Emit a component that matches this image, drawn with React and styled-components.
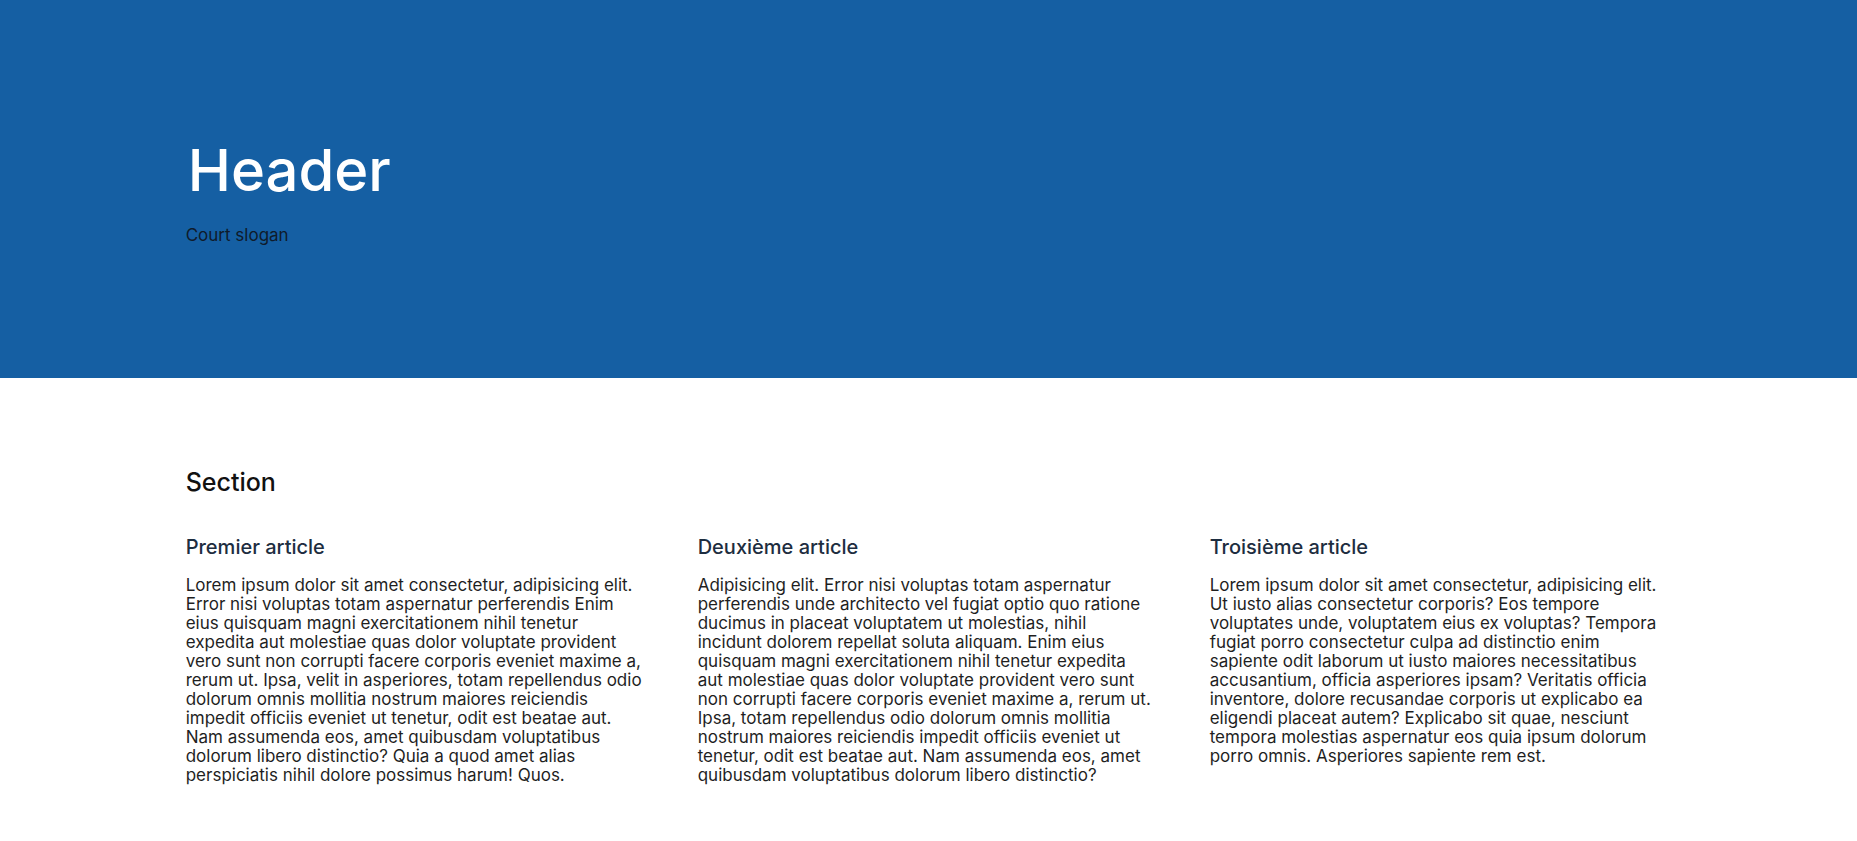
import React from 'react';
import styled, { createGlobalStyle } from 'styled-components';

const GlobalStyle = createGlobalStyle`
  html, body {
    margin: 0;
    padding: 0;
    background: #ffffff;
  }
  body {
    font-family: Inter, "DejaVu Sans", sans-serif;
    color: #1b1b1b;
  }
  h1, h2, h3, p {
    margin: 0;
  }
`;

const Page = styled.div`
  width: 100%;
`;

const Banner = styled.header`
  height: 378px;
  box-sizing: border-box;
  padding: 141px 10% 0;
  background-color: #155fa3;
`;

const BannerTitle = styled.h1`
  font-size: 58px;
  line-height: 58px;
  font-weight: 500;
  color: #ffffff;
  margin-left: 2px;
`;

const Slogan = styled.p`
  margin-top: 26px;
  font-size: 17px;
  line-height: 20px;
  font-weight: 400;
  color: #0f1b2b;
`;

const Main = styled.main`
  padding: 89px 10% 40px;
`;

const SectionTitle = styled.h2`
  font-size: 25px;
  line-height: 30px;
  font-weight: 500;
  color: #111111;
`;

const Articles = styled.div`
  display: grid;
  grid-template-columns: repeat(3, 457px);
  column-gap: 55px;
  margin-top: 38px;
`;

const Article = styled.article`
  min-width: 0;
`;

const ArticleTitle = styled.h3`
  font-size: 20px;
  line-height: 24px;
  font-weight: 500;
  color: #1d2d40;
`;

const ArticleText = styled.p`
  margin-top: 17px;
  font-size: 17px;
  line-height: 19px;
  font-weight: 400;
  color: #1f1f1f;
`;

const articles = [
  {
    title: 'Premier article',
    text: 'Lorem ipsum dolor sit amet consectetur, adipisicing elit. Error nisi voluptas totam aspernatur perferendis Enim eius quisquam magni exercitationem nihil tenetur expedita aut molestiae quas dolor voluptate provident vero sunt non corrupti facere corporis eveniet maxime a, rerum ut. Ipsa, velit in asperiores, totam repellendus odio dolorum omnis mollitia nostrum maiores reiciendis impedit officiis eveniet ut tenetur, odit est beatae aut. Nam assumenda eos, amet quibusdam voluptatibus dolorum libero distinctio? Quia a quod amet alias perspiciatis nihil dolore possimus harum! Quos.',
  },
  {
    title: 'Deuxième article',
    text: 'Adipisicing elit. Error nisi voluptas totam aspernatur perferendis unde architecto vel fugiat optio quo ratione ducimus in placeat voluptatem ut molestias, nihil incidunt dolorem repellat soluta aliquam. Enim eius quisquam magni exercitationem nihil tenetur expedita aut molestiae quas dolor voluptate provident vero sunt non corrupti facere corporis eveniet maxime a, rerum ut. Ipsa, totam repellendus odio dolorum omnis mollitia nostrum maiores reiciendis impedit officiis eveniet ut tenetur, odit est beatae aut. Nam assumenda eos, amet quibusdam voluptatibus dolorum libero distinctio?',
  },
  {
    title: 'Troisième article',
    text: 'Lorem ipsum dolor sit amet consectetur, adipisicing elit. Ut iusto alias consectetur corporis? Eos tempore voluptates unde, voluptatem eius ex voluptas? Tempora fugiat porro consectetur culpa ad distinctio enim sapiente odit laborum ut iusto maiores necessitatibus accusantium, officia asperiores ipsam? Veritatis officia inventore, dolore recusandae corporis ut explicabo ea eligendi placeat autem? Explicabo sit quae, nesciunt tempora molestias aspernatur eos quia ipsum dolorum porro omnis. Asperiores sapiente rem est.',
  },
];

const App = () => {
  return (
    <Page>
      <GlobalStyle />
      <Banner>
        <BannerTitle>Header</BannerTitle>
        <Slogan>Court slogan</Slogan>
      </Banner>
      <Main>
        <SectionTitle>Section</SectionTitle>
        <Articles>
          {articles.map((a) => (
            <Article key={a.title}>
              <ArticleTitle>{a.title}</ArticleTitle>
              <ArticleText>{a.text}</ArticleText>
            </Article>
          ))}
        </Articles>
      </Main>
    </Page>
  );
};

export default App;
